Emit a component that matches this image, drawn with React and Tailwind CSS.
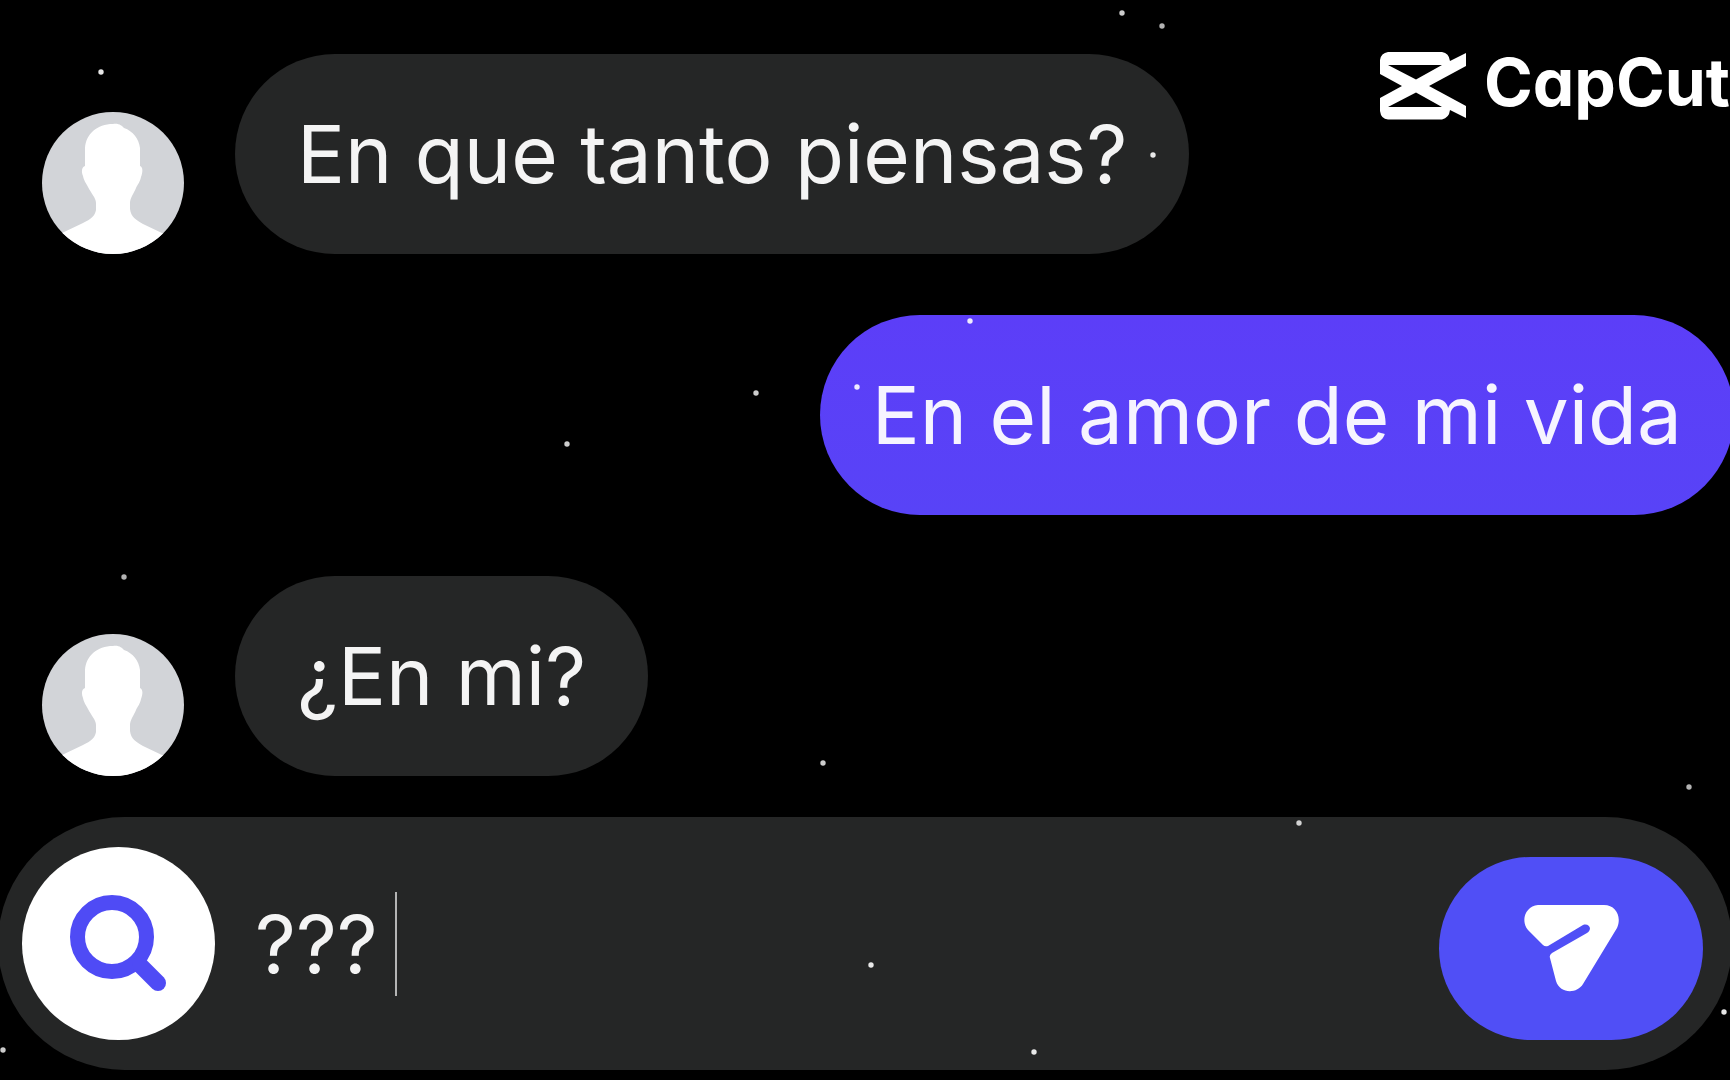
const STARS = [
  [1122, 13, 0.8], [1162, 26, 0.7], [101, 72, 0.9], [1153, 155, 0.9],
  [970, 321, 0.9], [857, 387, 0.9], [756, 393, 0.8], [567, 444, 0.8],
  [124, 577, 0.7], [823, 763, 0.8], [1689, 787, 0.7], [1299, 823, 0.8],
  [871, 965, 0.9], [1724, 1012, 0.9], [1034, 1052, 0.9], [3, 1050, 0.8],
];

function Stars() {
  return (
    <svg
      aria-hidden="true"
      viewBox="0 0 1730 1080"
      preserveAspectRatio="xMidYMin slice"
      className="pointer-events-none absolute inset-0 z-10 h-full w-full"
    >
      {STARS.map(([x, y, o]) => (
        <circle key={`${x}-${y}`} cx={x} cy={y} r="2.7" fill="#fff" opacity={o} />
      ))}
    </svg>
  );
}

function Watermark() {
  return (
    <div className="absolute right-0 top-[52px] flex items-start gap-[18px] text-white">
      <svg aria-hidden="true" viewBox="0 0 86 68" className="h-[68px] w-[86px]" fill="currentColor">
        <path
          fillRule="evenodd"
          d="M8 0H62Q69 1 70 9L86 1V14L49 34L86 54V66L70 58Q69 66 62 67.500H8Q1 67 0 59V46L22 34L0 22V8Q1 1 8 0ZM8 13L36 27.500L62 13ZM8 55L36 40.500L62 55Z"
        />
      </svg>
      <span className="font-['Inter',sans-serif] text-[66px] font-bold leading-[60px] [font-feature-settings:'cv11']">CapCut</span>
    </div>
  );
}

function Avatar() {
  return (
    <svg role="img" aria-label="Contacto" viewBox="0 0 142 142" className="size-[142px] shrink-0 rounded-full bg-[#d2d4d8]">
      <path
        fill="#fff"
        d="M71 12C77 11 80 14 82 16C91 19 97 27 98 36L98 54C101 55 101 60 99 65C98 70 96 72 94 76C92 81 88 86 88 91V97C89 105 94 108 101 112L122 122V142H20V121L41 111C49 107 53 104 54 98V91C54 86 49 81 46 75C44 71 42 69 41 64C39 59 40 55 43 54V36C44 22 55 12 71 12Z"
      />
    </svg>
  );
}

const BUBBLE = "rounded-full py-[60px] font-['Inter',sans-serif] text-[80px] leading-[80px] whitespace-nowrap";

function Received({ children }) {
  return (
    <li className="flex items-end gap-[51px] pl-[42px]">
      <Avatar />
      <p className={`${BUBBLE} bg-[#252626] px-[62px] text-[#f4f4f4]`}>{children}</p>
    </li>
  );
}

function Sent({ children }) {
  return (
    <li className="-mr-1 flex justify-end">
      <p className={`${BUBBLE} bg-linear-to-b from-[#5c3ef8] to-[#5843f7] px-[52px] text-[#f6f4ff]`}>{children}</p>
    </li>
  );
}

function Composer() {
  return (
    <form
      onSubmit={(e) => e.preventDefault()}
      className="-mx-0.5 flex items-center rounded-full bg-[#252626] py-[30px] pl-6 pr-[29px]"
    >
      <button type="button" aria-label="Buscar" className="flex size-[193px] shrink-0 items-center justify-center rounded-full bg-white">
        <svg aria-hidden="true" viewBox="0 0 96 96" className="size-24 overflow-visible" fill="none" stroke="#4f4bf5">
          <circle cx="41" cy="41" r="34.500" strokeWidth="15" />
          <path d="M69 69L87 87" strokeWidth="16" strokeLinecap="round" />
        </svg>
      </button>
      <div className="flex min-w-0 flex-1 items-center pl-10">
        <input
          type="text"
          aria-label="Mensaje"
          defaultValue="???"
          className="field-sizing-content bg-transparent font-['Inter',sans-serif] text-[80px] leading-[104px] text-[#f4f4f4] caret-transparent outline-none"
        />
        <span aria-hidden="true" className="ml-[17px] h-[104px] w-0.5 bg-[#b4b4b4]" />
      </div>
      <button type="submit" aria-label="Enviar" className="mt-2.5 flex h-[183px] w-[264px] shrink-0 items-center justify-center rounded-full bg-[#504ff6]">
        <svg aria-hidden="true" viewBox="0 0 95 87" className="h-[87px] w-[95px]" fill="#fff">
          <path d="M14 0H80C92 0 98 12 93 23L59 79C53 89 36 89 32 76L26 53Q25 50 28 48L63 28C69 24 65 18 59 20L24 41Q21 42 19 40L4 25C-4 15 2 1 14 0Z" />
        </svg>
      </button>
    </form>
  );
}

export default function App() {
  return (
    <main className="relative flex min-h-screen flex-col gap-[41px] overflow-hidden bg-black pt-[54px] pb-2.5">
      <ul className="flex flex-col gap-[61px]">
        <Received>En que tanto piensas?</Received>
        <Sent>En el amor de mi vida</Sent>
        <Received>¿En mi?</Received>
      </ul>
      <Composer />
      <Watermark />
      <Stars />
    </main>
  );
}
